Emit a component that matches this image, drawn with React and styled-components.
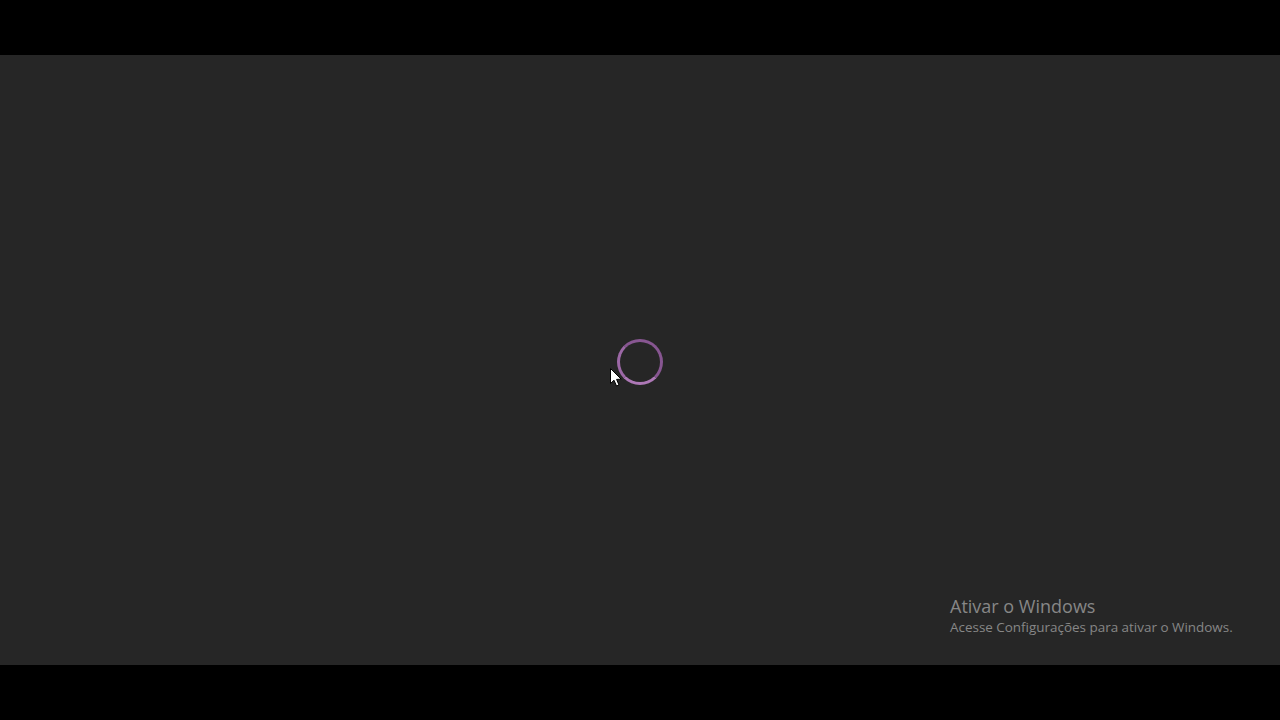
import React from "react";
import styled, { createGlobalStyle } from "styled-components";

const GlobalStyle = createGlobalStyle`
  html, body {
    margin: 0;
    height: 100%;
    background: #000;
    overflow: hidden;
  }
`;

const Screen = styled.div`
  width: 1280px;
  height: 720px;
  display: flex;
  flex-direction: column;
  background: #000;
`;

const Letterbox = styled.div`
  height: 55px;
  flex: none;
  background: #000;
`;

const Stage = styled.main`
  position: relative;
  flex: 1;
  display: flex;
  align-items: center;
  justify-content: center;
  padding-top: 4px;
  background: #262626;
`;

const LoaderWrap = styled.div`
  position: relative;
  width: 46px;
  height: 46px;
`;

const Ring = styled.div`
  box-sizing: border-box;
  width: 100%;
  height: 100%;
  border-radius: 50%;
  border: 3px solid #875691;
  border-bottom-color: #ad78b6;
  border-left-color: #9c68a6;
`;

const Cursor = styled.svg`
  position: absolute;
  left: -7px;
  top: 29px;
  width: 12px;
  height: 19px;
`;

const Watermark = styled.aside`
  position: absolute;
  left: 950px;
  top: 539px;
  color: #878787;
  font-family: "Open Sans", "Noto Sans", sans-serif;
  white-space: nowrap;
`;

const WatermarkTitle = styled.div`
  font-size: 18px;
  line-height: 24px;
`;

const WatermarkText = styled.div`
  font-size: 13.44px;
  line-height: 18px;
`;

export default function App() {
  return (
    <>
      <GlobalStyle />
      <Screen>
        <Letterbox />
        <Stage>
          <LoaderWrap>
            <Ring />
            <Cursor viewBox="0 0 12 19">
              <path
                d="M0.5 0.5 L0.5 15.5 L4 12.2 L6.5 18 L9 17 L6.6 11.4 L11.2 11.2 Z"
                fill="#fff"
                stroke="#000"
                strokeWidth="1"
              />
            </Cursor>
          </LoaderWrap>
          <Watermark>
            <WatermarkTitle>Ativar o Windows</WatermarkTitle>
            <WatermarkText>Acesse Configurações para ativar o Windows.</WatermarkText>
          </Watermark>
        </Stage>
        <Letterbox />
      </Screen>
    </>
  );
}
